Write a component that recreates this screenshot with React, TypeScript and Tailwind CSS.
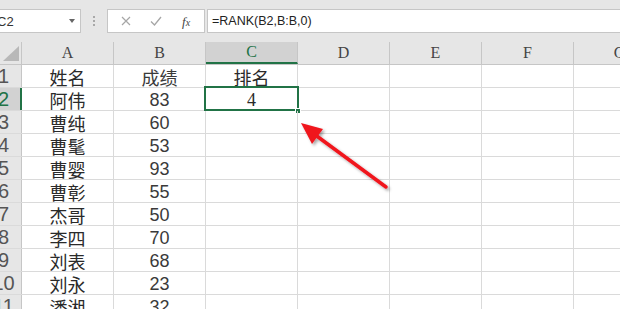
import React from 'react';

const rows: [string, string][] = [
  ['姓名', '成绩'],
  ['阿伟', '83'],
  ['曹纯', '60'],
  ['曹髦', '53'],
  ['曹婴', '93'],
  ['曹彰', '55'],
  ['杰哥', '50'],
  ['李四', '70'],
  ['刘表', '68'],
  ['刘永', '23'],
  ['潘湘', '32'],
];

const cols = ['A', 'B', 'C', 'D', 'E', 'F', 'G'];

const cjk = { fontFamily: '"Noto Sans CJK SC", "Liberation Sans", sans-serif' };

export default function App() {
  return (
    <div className="relative w-[620px] h-[309px] overflow-hidden bg-white" style={{ fontFamily: '"Liberation Sans", Arial, sans-serif' }}>
      {/* formula bar */}
      <div className="flex items-center h-[42px] bg-[#e6e6e6] pb-[9px] pt-[9px]">
        <div className="relative flex items-center w-[82px] h-[24px] -ml-px bg-white border border-[#c6c6c6] overflow-hidden">
          <span className="-ml-[3px] text-[13px] leading-none text-[#333]">C2</span>
          <span className="absolute left-[69px] top-[9px] w-0 h-0 border-l-[3px] border-r-[3px] border-t-[4px] border-l-transparent border-r-transparent border-t-[#666]" />
        </div>
        <div className="flex flex-col gap-[2px] ml-[12px] mr-[12px]">
          <span className="w-[2px] h-[2px] bg-[#a8a8a8]" />
          <span className="w-[2px] h-[2px] bg-[#a8a8a8]" />
          <span className="w-[2px] h-[2px] bg-[#a8a8a8]" />
        </div>
        <div className="flex items-center w-[98px] h-[24px] bg-white border border-[#c6c6c6]">
          <svg width="10" height="10" viewBox="0 0 10 10" className="ml-[13px]">
            <path d="M1 1 L9 9 M9 1 L1 9" stroke="#a6a6a6" strokeWidth="1.2" fill="none" />
          </svg>
          <svg width="12" height="10" viewBox="0 0 12 10" className="ml-[19px]">
            <path d="M1 5.5 L4.5 9 L11 1" stroke="#a6a6a6" strokeWidth="1.3" fill="none" />
          </svg>
          <span className="ml-[20px] text-[13px] leading-none italic text-[#444]" style={{ fontFamily: '"Liberation Serif", serif' }}>
            f<span className="text-[10px]">x</span>
          </span>
        </div>
        <div className="flex items-center flex-1 h-[24px] ml-[2px] -mr-px bg-white border border-[#c6c6c6]">
          <span className="ml-[4px] text-[12.5px] leading-none text-[#222]">=RANK(B2,B:B,0)</span>
        </div>
      </div>

      {/* column headers */}
      <div className="flex h-[23px] bg-[#e6e6e6] border-b border-[#c6c6c6]">
        <div className="relative w-[22px] shrink-0 border-r border-[#c6c6c6]">
          <span className="absolute left-[3px] bottom-[3px] w-0 h-0 border-l-[16px] border-b-[15px] border-l-transparent border-b-[#b8b8b8]" />
        </div>
        {cols.map((c) => (
          <div
            key={c}
            className={
              c === 'C'
                ? 'flex items-center justify-center w-[92px] shrink-0 bg-[#d2d2d2] border-r border-[#c6c6c6] border-b-2 border-b-[#217346] text-[#217346] text-[16px] leading-none'
                : 'flex items-center justify-center w-[92px] shrink-0 border-r border-[#c6c6c6] text-[#444] text-[16px] leading-none overflow-hidden'
            }
            style={{ fontFamily: '"Liberation Serif", serif' }}
          >
            {c}
          </div>
        ))}
      </div>

      {/* rows */}
      {rows.map(([name, score], i) => (
        <div key={i} className="flex h-[23px] border-b border-[#dadada]">
          <div
            className={
              i === 1
                ? 'flex items-center w-[22px] shrink-0 overflow-hidden bg-[#d2d2d2] border-r-2 border-[#217346]'
                : 'flex items-center w-[22px] shrink-0 overflow-hidden bg-[#e6e6e6] border-r border-[#c6c6c6]'
            }
          >
            <span
              className={
                i === 1
                  ? 'w-[33px] -ml-[13px] shrink-0 text-center text-[20px] leading-none text-[#217346]'
                  : 'w-[33px] -ml-[13px] shrink-0 text-center text-[20px] leading-none text-[#555]'
              }
            >
              {i + 1}
            </span>
          </div>
          <div className="flex items-center justify-center w-[92px] shrink-0 border-r border-[#dadada] text-[18px] leading-none text-[#2a2a2a] pt-[2px]" style={cjk}>
            {name}
          </div>
          <div
            className="flex items-center justify-center w-[92px] shrink-0 border-r border-[#dadada] text-[18px] leading-none text-[#3a3a3a] pt-[2px]"
            style={i === 0 ? cjk : undefined}
          >
            {score}
          </div>
          <div
            className="relative flex items-center justify-center w-[92px] shrink-0 border-r border-[#dadada] text-[18px] leading-none text-[#2a2a2a] pt-[2px]"
            style={i === 0 ? cjk : { fontFamily: '"Liberation Serif", serif' }}
          >
            {i === 0 ? '排名' : i === 1 ? '4' : ''}
            {i === 1 && (
              <>
                <span className="absolute -left-[2px] -top-[2px] w-[95px] h-[25px] border-2 border-[#217346]" />
                <span className="absolute -right-[4px] -bottom-[4px] w-[6px] h-[6px] bg-[#217346] border border-white" />
              </>
            )}
          </div>
          <div className="w-[92px] shrink-0 border-r border-[#dadada]" />
          <div className="w-[92px] shrink-0 border-r border-[#dadada]" />
          <div className="w-[92px] shrink-0 border-r border-[#dadada]" />
          <div className="w-[92px] shrink-0" />
        </div>
      ))}

      {/* red arrow annotation */}
      <svg className="absolute left-0 top-0 pointer-events-none" width="620" height="309" viewBox="0 0 620 309">
        <defs>
          <filter id="sh" x="-20%" y="-20%" width="140%" height="140%">
            <feDropShadow dx="2" dy="2" stdDeviation="1.5" floodColor="#000" floodOpacity="0.35" />
          </filter>
        </defs>
        <g filter="url(#sh)">
          <line x1="386" y1="187" x2="314" y2="134" stroke="#f0141e" strokeWidth="3.5" strokeLinecap="round" />
          <polygon points="301,123 323,129 312,144" fill="#f0141e" />
        </g>
      </svg>
    </div>
  );
}
